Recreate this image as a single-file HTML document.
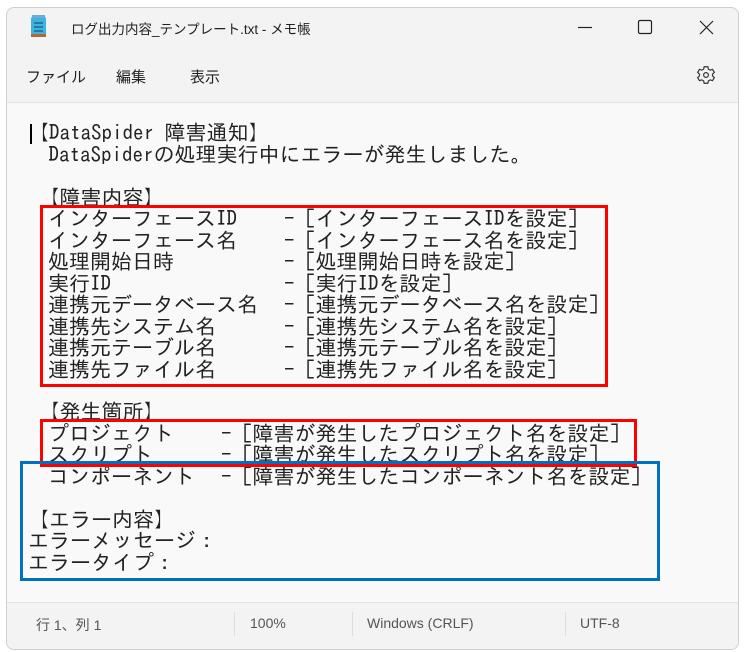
<!DOCTYPE html>
<html><head><meta charset="utf-8"><style>
html,body{margin:0;padding:0;background:#fff;width:744px;height:652px;overflow:hidden;position:relative}
.win{position:absolute;left:6px;top:7px;width:731px;height:641px;border:1px solid #cfcfcf;border-radius:8px;background:#f3f3f3;overflow:hidden}
.ui{font-family:"Liberation Sans","Noto Sans CJK JP",sans-serif;position:absolute;white-space:nowrap}
.t{position:absolute;font-family:"IPAGothic","Liberation Mono",monospace;font-size:21px;line-height:21.5px;color:#222;white-space:pre}
.box{position:absolute;box-sizing:border-box}
</style></head><body>
<div class="win">
  <div style="position:absolute;left:0;top:94px;width:731px;height:500px;background:#f9f9f9;border-top:1px solid #e3e3e3"></div>
  <div style="position:absolute;left:0;top:594px;width:731px;height:47px;background:#f3f3f3;border-top:1px solid #e3e3e3"></div>
</div>
<svg style="position:absolute;left:30px;top:14px" width="17" height="24" viewBox="0 0 17 24">
<rect x="1" y="3" width="15" height="19" rx="1.5" fill="#3bb5e0"/>
<rect x="1" y="20" width="15" height="3" fill="#b5652f"/>
<rect x="2" y="1" width="13" height="3" fill="#6fa9d8"/>
<line x1="4" y1="9" x2="13" y2="9" stroke="#1b4f7a" stroke-width="1.2"/>
<line x1="4" y1="13" x2="13" y2="13" stroke="#1b4f7a" stroke-width="1.2"/>
<line x1="4" y1="17" x2="13" y2="17" stroke="#1b4f7a" stroke-width="1.2"/>
</svg>
<div class="ui" style="left:71px;top:18px;font-size:13.5px;color:#222">ログ出力内容_テンプレート.txt - メモ帳</div>
<svg style="position:absolute;left:576px;top:18px" width="140" height="18" viewBox="0 0 140 18">
<line x1="2" y1="9.5" x2="16" y2="9.5" stroke="#222" stroke-width="1.2"/>
<rect x="62.5" y="2.5" width="13" height="13" rx="1.5" fill="none" stroke="#222" stroke-width="1.2"/>
<path d="M124 3 L137 16 M137 3 L124 16" stroke="#222" stroke-width="1.2"/>
</svg>
<div class="ui" style="left:26px;top:66px;font-size:15px;color:#222">ファイル</div>
<div class="ui" style="left:116px;top:66px;font-size:15px;color:#222">編集</div>
<div class="ui" style="left:190px;top:66px;font-size:15px;color:#222">表示</div>
<svg style="position:absolute;left:695px;top:64px" width="22" height="22" viewBox="0 0 24 24"><path fill="none" stroke="#333" stroke-width="1.3" d="M10 3h4l.6 2.6 2 1.1 2.5-.9 2 3.4-2 1.8v2l2 1.8-2 3.4-2.5-.9-2 1.1L14 21h-4l-.6-2.6-2-1.1-2.5.9-2-3.4 2-1.8v-2l-2-1.8 2-3.4 2.5.9 2-1.1z"/><circle cx="12" cy="12" r="2.6" fill="none" stroke="#333" stroke-width="1.3"/></svg>

<div style="position:absolute;left:30px;top:124px;width:1.5px;height:20px;background:#000"></div>
<div class="t" style="left:28px;top:122px">【DataSpider 障害通知】</div>
<div class="t" style="left:38px;top:144px"> DataSpiderの処理実行中にエラーが発生しました。</div>
<div class="t" style="left:28px;top:187px"> 【障害内容】</div>
<div class="t" style="left:48px;top:208px">インターフェースID</div>
<div class="t" style="left:48px;top:230px">インターフェース名</div>
<div class="t" style="left:48px;top:251px">処理開始日時</div>
<div class="t" style="left:48px;top:273px">実行ID</div>
<div class="t" style="left:48px;top:294px">連携元データベース名</div>
<div class="t" style="left:48px;top:316px">連携先システム名</div>
<div class="t" style="left:48px;top:337px">連携元テーブル名</div>
<div class="t" style="left:48px;top:359px">連携先ファイル名</div>
<div class="t" style="left:284px;top:208px">- [インターフェースIDを設定]</div>
<div class="t" style="left:284px;top:230px">- [インターフェース名を設定]</div>
<div class="t" style="left:284px;top:251px">- [処理開始日時を設定]</div>
<div class="t" style="left:284px;top:273px">- [実行IDを設定]</div>
<div class="t" style="left:284px;top:294px">- [連携元データベース名を設定]</div>
<div class="t" style="left:284px;top:316px">- [連携先システム名を設定]</div>
<div class="t" style="left:284px;top:337px">- [連携元テーブル名を設定]</div>
<div class="t" style="left:284px;top:359px">- [連携先ファイル名を設定]</div>
<div class="t" style="left:28px;top:401px"> 【発生箇所】</div>
<div class="t" style="left:48px;top:423px">プロジェクト</div>
<div class="t" style="left:48px;top:444px">スクリプト</div>
<div class="t" style="left:48px;top:466px">コンポーネント</div>
<div class="t" style="left:221px;top:423px">- [障害が発生したプロジェクト名を設定]</div>
<div class="t" style="left:221px;top:444px">- [障害が発生したスクリプト名を設定]</div>
<div class="t" style="left:221px;top:466px">- [障害が発生したコンポーネント名を設定]</div>
<div class="t" style="left:28px;top:509px">【エラー内容】</div>
<div class="t" style="left:28px;top:530px">エラーメッセージ：</div>
<div class="t" style="left:28px;top:552px">エラータイプ：</div>

<div class="box" style="left:40px;top:205px;width:568px;height:182px;border:3px solid #f00"></div>
<div class="box" style="left:40px;top:419px;width:597px;height:48px;border:3px solid #f00"></div>
<div class="box" style="left:20px;top:461px;width:640px;height:120px;border:3px solid #0070c0"></div>

<div style="position:absolute;left:234px;top:612px;width:1px;height:24px;background:#ddd"></div>
<div style="position:absolute;left:352px;top:612px;width:1px;height:24px;background:#ddd"></div>
<div style="position:absolute;left:565px;top:612px;width:1px;height:24px;background:#ddd"></div>
<div class="ui" style="left:36px;top:615px;font-size:14px;color:#555">行 1、列 1</div>
<div class="ui" style="left:250px;top:615px;font-size:14px;color:#555">100%</div>
<div class="ui" style="left:367px;top:615px;font-size:14px;color:#555">Windows (CRLF)</div>
<div class="ui" style="left:580px;top:615px;font-size:14px;color:#555">UTF-8</div>
</body></html>
